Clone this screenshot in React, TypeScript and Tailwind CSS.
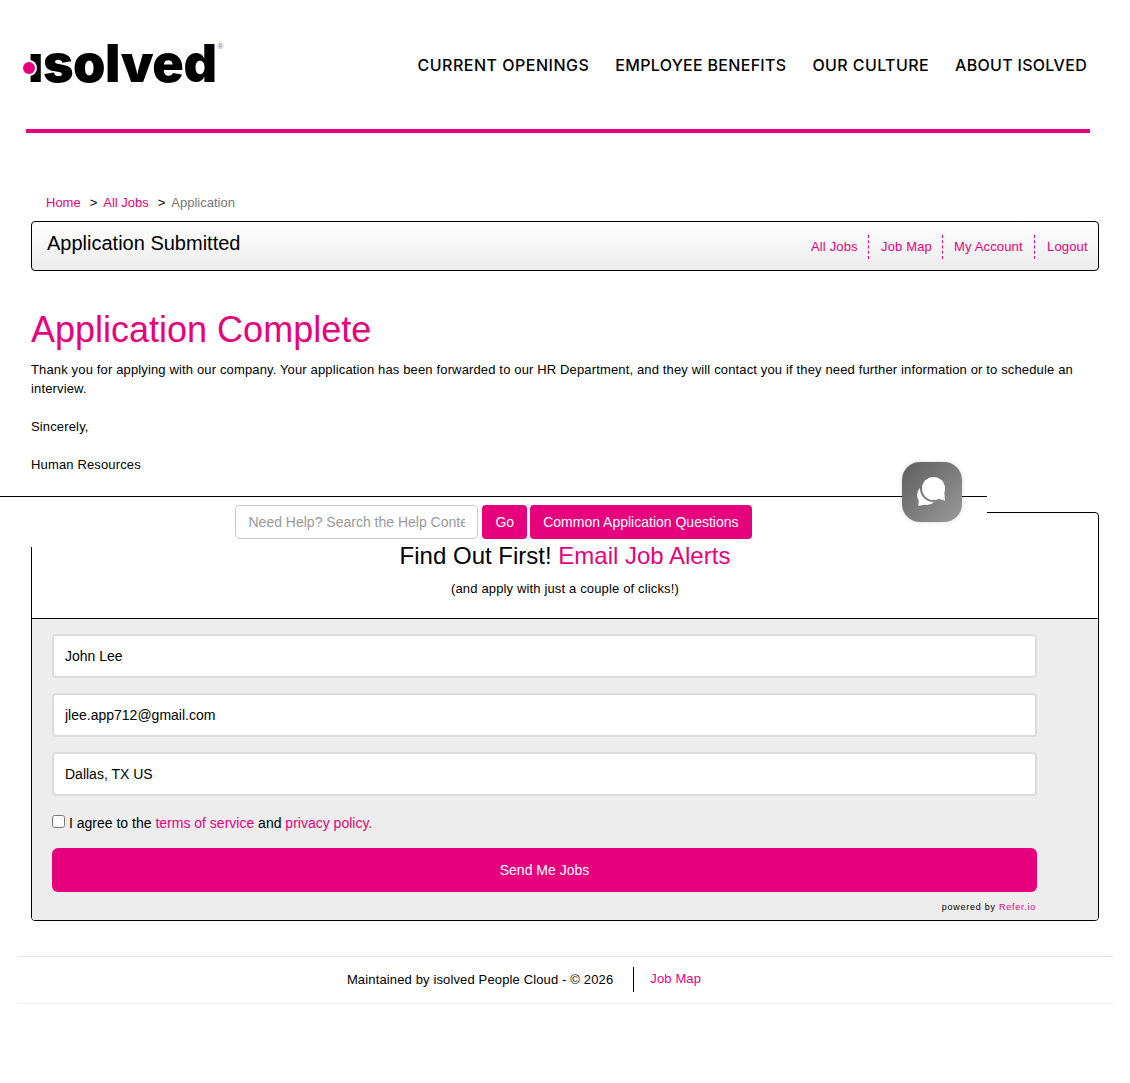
import React from 'react';

const pink = 'text-[#e6007e]';
const divider = 'border-r border-dashed border-[#e6007e]';

const TextField = ({ value }: { value: string }) => (
  <input
    readOnly
    value={value}
    className="h-[44px] w-full rounded border-2 border-[#dcdcdc] bg-white px-[11px] text-[14px] text-black outline-none"
  />
);

const ChatIcon = () => (
  <svg width="32" height="32" viewBox="0 0 32 32" fill="white">
    <mask id="behind">
      <rect width="32" height="32" fill="white" />
      <circle cx="17.500" cy="12.500" r="13.500" fill="black" />
      <path d="M20 23 L30 27 L30 15z" fill="black" />
    </mask>
    <g mask="url(#behind)">
      <circle cx="11" cy="19" r="10" />
      <path d="M3 22 L2.300 30 L12 28z" />
    </g>
    <circle cx="17.500" cy="12.500" r="11.500" />
    <path d="M22 22.500 L29 24.700 L28.200 15z" />
  </svg>
);

export default function App() {
  return (
    <div className="min-h-[1083px] bg-white font-['Liberation_Sans',sans-serif] text-black">
      <header className="mx-[26px] mr-[40px] flex h-[133px] items-start justify-between border-b-4 border-[#e6007e]">
        <div className="relative mt-[28px] ml-[2px] flex items-start">
          <span className="block font-['Inter',sans-serif] text-[52px] leading-[72px] font-black tracking-[-0.45px]">ısolved</span>
          <span className="mt-[15px] ml-[1px] text-[8px] leading-none text-gray-500">®</span>
          <span className="absolute top-[34px] left-[-5px] size-[12px] rounded-full bg-[#e6007e] ring-2 ring-white" />
        </div>
        <nav className="mt-[55px] mr-[3px] flex gap-[26px] font-['Inter',sans-serif] text-[16px] leading-[20px] font-medium tracking-[0.3px]">
          <a className="tracking-[0.5px]">CURRENT OPENINGS</a>
          <a>EMPLOYEE BENEFITS</a>
          <a className="tracking-[0.4px]">OUR CULTURE</a>
          <a>ABOUT ISOLVED</a>
        </nav>
      </header>

      <div className="mt-[62px] flex pl-[46px] text-[13px] leading-[16px]">
        <a className={`mr-[9px] ${pink}`}>Home</a>
        <span className="mr-[6px]">&gt;</span>
        <a className={`mr-[9px] ${pink}`}>All Jobs</a>
        <span className="text-[#777]">
          <span className="mr-[3px] text-black">&gt;</span> Application
        </span>
      </div>

      <div className="mx-[31px] mt-[10px] flex h-[50px] items-center justify-between rounded border border-black bg-gradient-to-b from-white to-[#ececec] pr-[11px] pl-[15px]">
        <h2 className="-mt-[6px] text-[20px] leading-[24px]">Application Submitted</h2>
        <div className={`mt-[1px] flex text-[13px] leading-[24px] tracking-[0.15px] ${pink}`}>
          <a className={`${divider} w-[58px]`}>All Jobs</a>
          <a className={`${divider} w-[74px] pl-[12px]`}>Job Map</a>
          <a className={`${divider} w-[92px] pl-[11px]`}>My Account</a>
          <a className="w-[52px] pl-[12px]">Logout</a>
        </div>
      </div>

      <main className="mx-[31px] mt-[37px]">
        <h1 className={`text-[36px] leading-[44px] ${pink}`}>Application Complete</h1>
        <div className="mt-[8px] text-[13px] leading-[19px] tracking-[0.145px]">
          <p>
            Thank you for applying with our company. Your application has been forwarded to our HR Department, and they will contact you if they need further information or to schedule an interview.
          </p>
          <p className="mt-[19px]">Sincerely,</p>
          <p className="mt-[19px]">Human Resources</p>
        </div>
      </main>

      <div className="relative mt-[22px] pt-[16px]">
        <div className="absolute top-0 left-0 flex h-[51px] w-[987px] justify-center border-t border-black bg-white pt-[8px]">
          <input
            readOnly
            placeholder="Need Help? Search the Help Content"
            className="h-[34px] w-[243px] rounded border border-[#ccc] bg-white px-[12px] text-[14px] outline-none placeholder:text-[#999]"
          />
          <button className="ml-[4px] h-[34px] rounded bg-[#e6007e] px-[13px] text-[14px] text-white">Go</button>
          <button className="ml-[3px] h-[34px] rounded bg-[#e6007e] px-[13px] text-[14px] text-white">Common Application Questions</button>
        </div>
        <div className="absolute top-[-34px] left-[902px] z-10 flex size-[60px] items-center justify-center rounded-[18px] bg-gradient-to-br from-[#5e5e5e] to-[#9a9a9a] shadow-[0_0_4px_rgba(0,0,0,0.15)]">
          <ChatIcon />
        </div>

        <section className="mx-[31px] overflow-hidden rounded border border-black">
          <div className="flex h-[106px] flex-col items-center border-b border-black pt-[29px]">
            <h3 className="text-[24px] leading-[28px]">
              Find Out First! <a className={pink}>Email Job Alerts</a>
            </h3>
            <p className="mt-[10px] text-[13px] leading-[18px] tracking-[0.15px]">(and apply with just a couple of clicks!)</p>
          </div>
          <form className="bg-[#ededed] pt-[15px] pr-[61px] pb-[7px] pl-[20px]">
            <div className="flex flex-col gap-[15px]">
              <TextField value="John Lee" />
              <TextField value="jlee.app712@gmail.com" />
              <TextField value="Dallas, TX US" />
            </div>
            <label className="mt-[16px] flex items-start text-[14px] leading-[22px]">
              <input type="checkbox" className="mt-[3px] mr-[4px] size-[13px]" />
              <span>
                I agree to the <a className={pink}>terms of service</a> and <a className={pink}>privacy policy.</a>
              </span>
            </label>
            <button type="button" className="mt-[14px] h-[44px] w-full rounded-md bg-[#e6007e] text-[14px] text-white">Send Me Jobs</button>
            <p className="mt-[9px] pr-[1px] text-right text-[9px] leading-[12px] tracking-[0.75px]">
              powered by <a className={pink}>Refer.io</a>
            </p>
          </form>
        </section>
      </div>

      <footer className="mx-[16px] mt-[35px] flex h-[48px] items-center justify-center rounded-[3px] border-t border-b border-t-[#e4e4e4] border-b-[#f0f0f0] pr-[82px] pb-[2px] text-[13px] tracking-[0.14px]">
        <span className="border-r border-black pr-[20px] leading-[25px]">Maintained by isolved People Cloud - © 2026</span>
        <a className={`pl-[16px] ${pink}`}>Job Map</a>
      </footer>
    </div>
  );
}
